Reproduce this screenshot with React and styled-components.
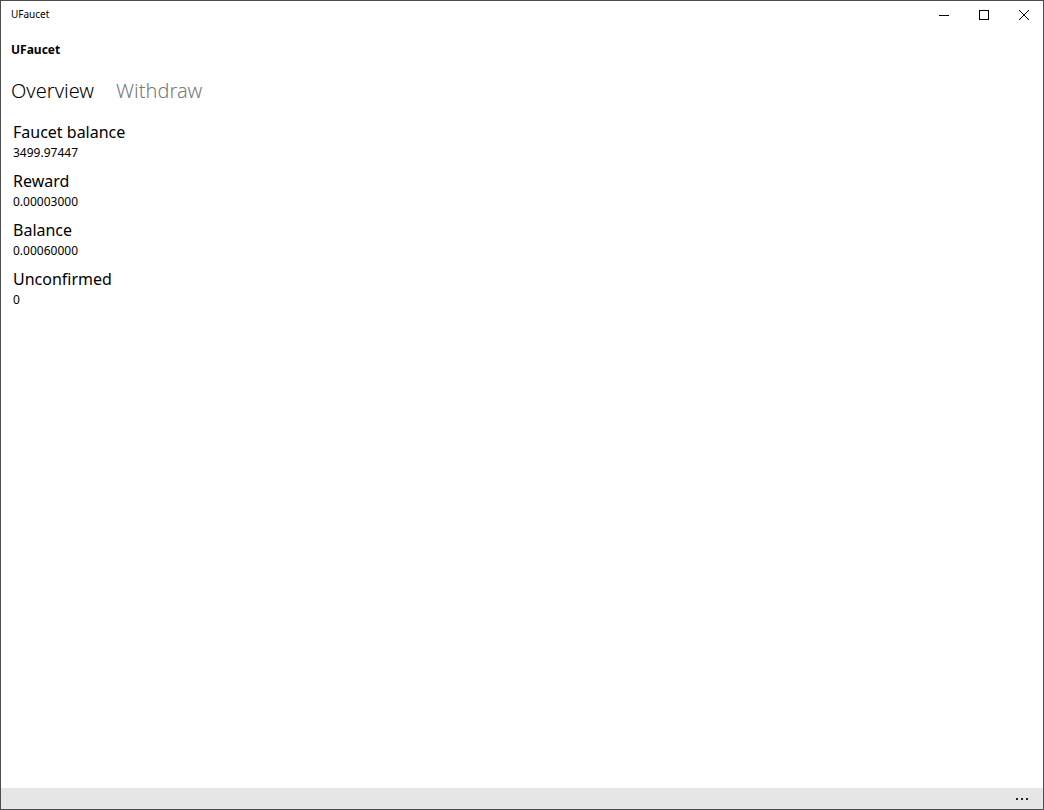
import React from 'react'
import styled, { createGlobalStyle } from 'styled-components'

const GlobalStyle = createGlobalStyle`
  html, body {
    margin: 0;
    padding: 0;
    background: #ffffff;
  }
  body {
    font-family: "Noto Sans", "Open Sans", sans-serif;
    color: #000000;
  }
`

const Window = styled.div`
  box-sizing: border-box;
  width: 1044px;
  height: 810px;
  border: 1px solid #4d4d4d;
  display: flex;
  flex-direction: column;
  background: #ffffff;
`

const TitleBar = styled.div`
  height: 27px;
  display: flex;
  align-items: center;
  justify-content: space-between;
  flex-shrink: 0;
`

const TitleText = styled.span`
  font-size: 10px;
  line-height: 14px;
  padding: 0 0 2px 10px;
  color: #000;
`

const Controls = styled.div`
  display: flex;
  height: 100%;
`

const ControlButton = styled.div`
  width: 40px;
  height: 100%;
  display: flex;
  align-items: center;
  justify-content: center;
  &:last-child {
    width: 39px;
  }
`

const Content = styled.div`
  flex: 1;
  display: flex;
  flex-direction: column;
`

const AppName = styled.div`
  font-size: 12px;
  font-weight: 700;
  padding: 13px 0 0 10px;
  line-height: 18px;
`

const Pivot = styled.div`
  display: flex;
  gap: 22px;
  padding: 19px 0 0 10px;
`

const PivotItem = styled.span`
  font-size: 20px;
  font-weight: 300;
  line-height: 26px;
  color: ${p => (p.active ? '#000000' : '#7a7a7a')};
`

const Fields = styled.div`
  display: flex;
  flex-direction: column;
  gap: 8px;
  padding: 17px 0 0 12px;
`

const Field = styled.div`
  display: flex;
  flex-direction: column;
`

const Label = styled.div`
  font-size: 16px;
  line-height: 23px;
`

const Value = styled.div`
  font-size: 12px;
  line-height: 18px;
  color: #000;
`

const CommandBar = styled.div`
  height: 21px;
  background: #e6e6e6;
  display: flex;
  justify-content: flex-end;
  align-items: center;
  padding-right: 15px;
  flex-shrink: 0;
`

const Dots = styled.span`
  display: flex;
  gap: 3px;
  & i {
    width: 2px;
    height: 2px;
    background: #222;
    display: block;
  }
`

const fields = [
  { label: 'Faucet balance', value: '3499.97447' },
  { label: 'Reward', value: '0.00003000' },
  { label: 'Balance', value: '0.00060000' },
  { label: 'Unconfirmed', value: '0' }
]

const App = () => (
  <>
    <GlobalStyle />
    <Window>
      <TitleBar>
        <TitleText>UFaucet</TitleText>
        <Controls>
          <ControlButton>
            <svg width="10" height="10" viewBox="0 0 10 10">
              <path d="M0 5.5h10" stroke="#000" strokeWidth="1" />
            </svg>
          </ControlButton>
          <ControlButton>
            <svg width="10" height="10" viewBox="0 0 10 10">
              <rect x="0.5" y="0.5" width="9" height="9" fill="none" stroke="#000" strokeWidth="1" />
            </svg>
          </ControlButton>
          <ControlButton>
            <svg width="10" height="10" viewBox="0 0 10 10">
              <path d="M0 0L10 10M10 0L0 10" stroke="#000" strokeWidth="1" />
            </svg>
          </ControlButton>
        </Controls>
      </TitleBar>
      <Content>
        <AppName>UFaucet</AppName>
        <Pivot>
          <PivotItem active>Overview</PivotItem>
          <PivotItem>Withdraw</PivotItem>
        </Pivot>
        <Fields>
          {fields.map(f => (
            <Field key={f.label}>
              <Label>{f.label}</Label>
              <Value>{f.value}</Value>
            </Field>
          ))}
        </Fields>
      </Content>
      <CommandBar>
        <Dots>
          <i />
          <i />
          <i />
        </Dots>
      </CommandBar>
    </Window>
  </>
)

export default App
